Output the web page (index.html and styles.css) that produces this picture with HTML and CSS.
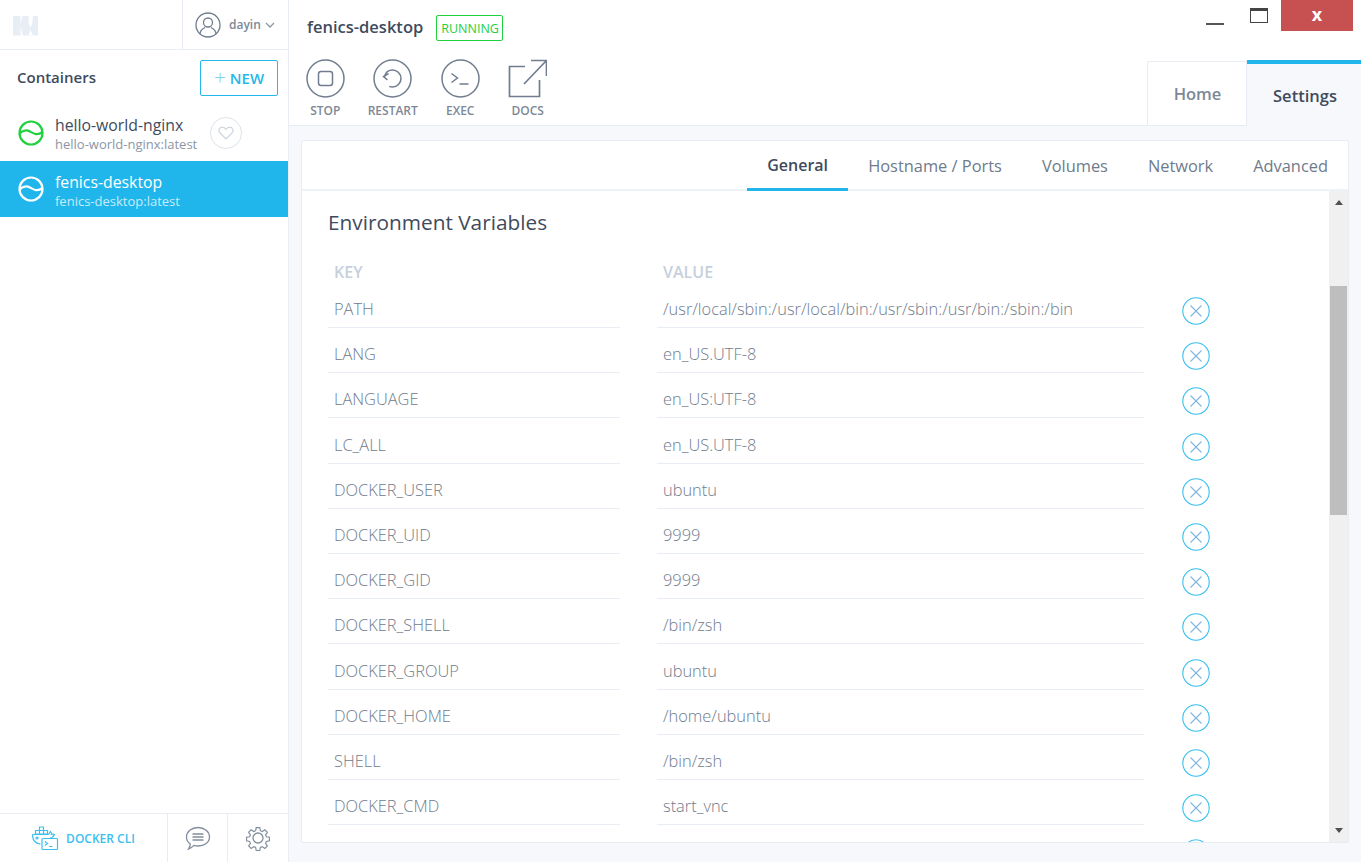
FILE: index.html
```html
<!DOCTYPE html>
<html lang="en">
<head>
    <meta charset="UTF-8">
    <title>Kitematic</title>
    <link rel="stylesheet" href="styles.css">
</head>
<body>
<div class="app">

    <aside class="sidebar">
        <div class="side-top">
            <div class="logo">
                <svg width="25" height="20" viewBox="0 0 25 20"><path fill="#e8eef5" d="M0 0h25v19.500H0z"/><path fill="#fff" d="M7.500 0h2L7.500 8zM7.500 11l2.500 8.500H7.500zM15.500 0h4.500l-.8 8-1.700 3.500L15.800 8zM17.500 13.500l-2 6h4.500z"/></svg>
            </div>
            <div class="user">
                <svg width="26" height="26" viewBox="0 0 26 26" fill="none" stroke="#717d8f" stroke-width="1.300"><circle cx="13" cy="13" r="12"/><circle cx="13" cy="10.500" r="4.500"/><path d="M5 22c0-4 3-5.500 5-6.500M21 22c0-4-3-5.500-5-6.500"/></svg>
                <span class="user-name">dayin</span>
                <svg width="10" height="6" viewBox="0 0 10 6" fill="none" stroke="#8b96a5" stroke-width="1.300"><path d="M1 1l4 4 4-4"/></svg>
            </div>
        </div>

        <div class="side-head">
            <span class="side-title">Containers</span>
            <button class="new-btn"><span class="plus">+</span> NEW</button>
        </div>

        <ul class="container-list">
            <li class="container-item first">
                <svg class="status" width="26" height="26" viewBox="0 0 26 26" fill="none" stroke="#1fd13c" stroke-width="2.200"><circle cx="13" cy="13" r="11.500"/><path d="M1.500 13.500C5 10 8.500 9.500 12 11.500S19 16 24.500 12"/></svg>
                <div class="item-text">
                    <div class="item-name">hello-world-nginx</div>
                    <div class="item-image">hello-world-nginx:latest</div>
                </div>
                <div class="fav">
                    <svg width="16" height="14" viewBox="0 0 16 14" fill="none" stroke="#cdd5e0" stroke-width="1.200"><path d="M8 13L2 7C0 5 1 1.200 4.200 1.200 6 1.200 7.300 2.300 8 3.500 8.700 2.300 10 1.200 11.800 1.200 15 1.200 16 5 14 7z"/></svg>
                </div>
            </li>
            <li class="container-item active">
                <svg class="status" width="26" height="26" viewBox="0 0 26 26" fill="none" stroke="#fff" stroke-width="2.200"><circle cx="13" cy="13" r="11.500"/><path d="M1.500 13.500C5 10 8.500 9.500 12 11.500S19 16 24.500 12"/></svg>
                <div class="item-text">
                    <div class="item-name">fenics-desktop</div>
                    <div class="item-image">fenics-desktop:latest</div>
                </div>
            </li>
        </ul>

        <div class="side-foot">
            <div class="foot-cli">
                <svg width="27" height="25" viewBox="0 0 27 25" fill="none" stroke="#3cc0ee" stroke-width="1.200"><path d="M7.500 1h4v3.500h-4zM3.500 4.500h4V8h-4zM7.500 4.500h4V8h-4zM11.500 4.500h4V8h-4zM0.500 8.500h15.500c1 0 1.500-2 2.500-3 .8 1 1.200 2 1 3 1-.5 2-.5 3 0-1 2-2.500 3.500-4.500 3.500"/><path d="M0.500 8.500c0 5 2.500 9 8 9.500"/><circle cx="5" cy="12" r="1"/><rect x="10" y="12.500" width="15.500" height="11" rx="1"/><path d="M13 15.500l2.500 2-2.500 2M17 20.500h3.500"/></svg>
                <span>DOCKER CLI</span>
            </div>
            <div class="foot-btn">
                <svg width="26" height="25" viewBox="0 0 26 25" fill="none" stroke="#838e9d" stroke-width="1.300"><path d="M13 1.500c6.500 0 11.500 4 11.500 9.500S19.500 20 13 20c-1.500 0-3-.2-4-.6-1.500 1.500-3 3-5.500 3.600 1-1.500 1.800-3 1.800-5C3 16.500 1.500 14 1.500 11 1.500 5.500 6.500 1.500 13 1.500z"/><path d="M7.500 8h11M7.500 11h11M7.500 14h11"/></svg>
            </div>
            <div class="foot-btn">
                <svg width="26" height="26" viewBox="0 0 26 26" fill="none" stroke="#838e9d" stroke-width="1.300"><circle cx="13" cy="13" r="5"/><path d="M11 1.500h4l.6 3.400 2.100.9 2.900-2 2.800 2.800-2 2.900.9 2.100 3.400.6v4l-3.400.6-.9 2.100 2 2.900-2.800 2.800-2.900-2-2.100.9-.6 3.400h-4l-.6-3.400-2.100-.9-2.900 2-2.800-2.800 2-2.900-.9-2.100-3.400-.6v-4l3.400-.6.9-2.100-2-2.900 2.800-2.800 2.900 2 2.100-.9z" transform="translate(1.300 1.300) scale(.9)"/></svg>
            </div>
        </div>
    </aside>

    <main class="main">
        <header class="main-head">
            <div class="head-left">
                <div class="title-row">
                    <span class="title">fenics-desktop</span>
                    <span class="state">RUNNING</span>
                </div>
                <div class="actions">
                    <div class="action">
                        <svg width="39" height="39" viewBox="0 0 39 39" fill="none" stroke="#717d8f" stroke-width="1.500"><circle cx="19.500" cy="19.500" r="18.500"/><rect x="12.500" y="12.500" width="14" height="14" rx="2.500"/></svg>
                        <span>STOP</span>
                    </div>
                    <div class="action">
                        <svg width="39" height="39" viewBox="0 0 39 39" fill="none" stroke="#717d8f" stroke-width="1.500"><circle cx="19.500" cy="19.500" r="18.500"/><path d="M11.500 17.500c1-4 4-6.500 8-6.500 4.700 0 8.500 3.800 8.500 8.500S24.200 28 19.500 28c-1.200 0-2.300-.2-3.300-.7"/><path d="M15.500 14.500l-5 3 4 3.500"/></svg>
                        <span>RESTART</span>
                    </div>
                    <div class="action">
                        <svg width="39" height="39" viewBox="0 0 39 39" fill="none" stroke="#717d8f" stroke-width="1.500"><circle cx="19.500" cy="19.500" r="18.500"/><path d="M10.500 14.500l6 4.500-6 4.500M18.500 25h9"/></svg>
                        <span>EXEC</span>
                    </div>
                    <div class="action">
                        <svg width="39" height="39" viewBox="0 0 39 39" fill="none" stroke="#717d8f" stroke-width="1.700"><path d="M17 7.500H1.500v30h30V21"/><path d="M16 25L38 2M23 1.500h15.500V17"/></svg>
                        <span>DOCS</span>
                    </div>
                </div>
            </div>
            <div class="head-right">
                <div class="win-controls">
                    <span class="win-min"></span>
                    <span class="win-max"></span>
                    <span class="win-close">x</span>
                </div>
                <nav class="main-tabs">
                    <div class="main-tab">Home</div>
                    <div class="main-tab selected">Settings</div>
                </nav>
            </div>
        </header>

        <section class="card">
            <nav class="sub-tabs">
                <div class="sub-tab selected">General</div>
                <div class="sub-tab">Hostname / Ports</div>
                <div class="sub-tab">Volumes</div>
                <div class="sub-tab">Network</div>
                <div class="sub-tab">Advanced</div>
            </nav>
            <div class="card-body">
                <div class="scroll-area">
                    <h3>Environment Variables</h3>
                    <div class="env-head"><span class="col-key">KEY</span><span class="col-value">VALUE</span></div>
                    <div class="env-row"><div class="cell-key">PATH</div><div class="cell-value">/usr/local/sbin:/usr/local/bin:/usr/sbin:/usr/bin:/sbin:/bin</div><svg class="remove" viewBox="0 0 28 28"><circle cx="14" cy="14" r="13.200"/><path d="M8.500 8.500l11 11M19.500 8.500l-11 11"/></svg></div>
                    <div class="env-row"><div class="cell-key">LANG</div><div class="cell-value">en_US.UTF-8</div><svg class="remove" viewBox="0 0 28 28"><circle cx="14" cy="14" r="13.200"/><path d="M8.500 8.500l11 11M19.500 8.500l-11 11"/></svg></div>
                    <div class="env-row"><div class="cell-key">LANGUAGE</div><div class="cell-value">en_US:UTF-8</div><svg class="remove" viewBox="0 0 28 28"><circle cx="14" cy="14" r="13.200"/><path d="M8.500 8.500l11 11M19.500 8.500l-11 11"/></svg></div>
                    <div class="env-row"><div class="cell-key">LC_ALL</div><div class="cell-value">en_US.UTF-8</div><svg class="remove" viewBox="0 0 28 28"><circle cx="14" cy="14" r="13.200"/><path d="M8.500 8.500l11 11M19.500 8.500l-11 11"/></svg></div>
                    <div class="env-row"><div class="cell-key">DOCKER_USER</div><div class="cell-value">ubuntu</div><svg class="remove" viewBox="0 0 28 28"><circle cx="14" cy="14" r="13.200"/><path d="M8.500 8.500l11 11M19.500 8.500l-11 11"/></svg></div>
                    <div class="env-row"><div class="cell-key">DOCKER_UID</div><div class="cell-value">9999</div><svg class="remove" viewBox="0 0 28 28"><circle cx="14" cy="14" r="13.200"/><path d="M8.500 8.500l11 11M19.500 8.500l-11 11"/></svg></div>
                    <div class="env-row"><div class="cell-key">DOCKER_GID</div><div class="cell-value">9999</div><svg class="remove" viewBox="0 0 28 28"><circle cx="14" cy="14" r="13.200"/><path d="M8.500 8.500l11 11M19.500 8.500l-11 11"/></svg></div>
                    <div class="env-row"><div class="cell-key">DOCKER_SHELL</div><div class="cell-value">/bin/zsh</div><svg class="remove" viewBox="0 0 28 28"><circle cx="14" cy="14" r="13.200"/><path d="M8.500 8.500l11 11M19.500 8.500l-11 11"/></svg></div>
                    <div class="env-row"><div class="cell-key">DOCKER_GROUP</div><div class="cell-value">ubuntu</div><svg class="remove" viewBox="0 0 28 28"><circle cx="14" cy="14" r="13.200"/><path d="M8.500 8.500l11 11M19.500 8.500l-11 11"/></svg></div>
                    <div class="env-row"><div class="cell-key">DOCKER_HOME</div><div class="cell-value">/home/ubuntu</div><svg class="remove" viewBox="0 0 28 28"><circle cx="14" cy="14" r="13.200"/><path d="M8.500 8.500l11 11M19.500 8.500l-11 11"/></svg></div>
                    <div class="env-row"><div class="cell-key">SHELL</div><div class="cell-value">/bin/zsh</div><svg class="remove" viewBox="0 0 28 28"><circle cx="14" cy="14" r="13.200"/><path d="M8.500 8.500l11 11M19.500 8.500l-11 11"/></svg></div>
                    <div class="env-row"><div class="cell-key">DOCKER_CMD</div><div class="cell-value">start_vnc</div><svg class="remove" viewBox="0 0 28 28"><circle cx="14" cy="14" r="13.200"/><path d="M8.500 8.500l11 11M19.500 8.500l-11 11"/></svg></div>
                    <div class="env-row"><div class="cell-key">&nbsp;</div><div class="cell-value">&nbsp;</div><svg class="remove" viewBox="0 0 28 28"><circle cx="14" cy="14" r="13.200"/><path d="M8.500 8.500l11 11M19.500 8.500l-11 11"/></svg></div>
                </div>
                <div class="scrollbar">
                    <div class="arrow-up"></div>
                    <div class="track"><div class="thumb"></div></div>
                    <div class="arrow-down"></div>
                </div>
            </div>
        </section>
    </main>

</div>
</body>
</html>
```

FILE: styles.css
```css
* {
    box-sizing: border-box;
}

html, body {
    height: 100%;
    margin: 0;
}

body {
    font-family: "Open Sans", "Noto Sans", sans-serif;
    background-color: #fff;
    overflow: hidden;
}

.app {
    display: flex;
    height: 862px;
}

/* sidebar */
.sidebar {
    width: 289px;
    flex: none;
    display: flex;
    flex-direction: column;
    border-right: 1px solid #e8edf3;
}

.side-top {
    height: 50px;
    flex: none;
    display: flex;
    border-bottom: 1px solid #e8edf3;
}

.logo {
    flex: 1;
    padding: 16px 0 0 13px;
}

.user {
    width: 106px;
    display: flex;
    align-items: center;
    gap: 8px;
    padding-left: 12px;
    border-left: 1px solid #e8edf3;
}

.user-name {
    font-size: 12px;
    font-weight: 600;
    color: #7d8897;
    margin-right: -4px;
}

.side-head {
    height: 60px;
    flex: none;
    display: flex;
    justify-content: space-between;
    padding: 10px 10px 0 17px;
}

.side-title {
    font-size: 15px;
    font-weight: 600;
    color: #3f4b5c;
    line-height: 34px;
}

.new-btn {
    width: 78px;
    height: 36px;
    padding: 0;
    border: 1px solid #24b8eb;
    border-radius: 2px;
    background-color: #fff;
    color: #24b8eb;
    font-family: inherit;
    font-size: 15px;
    font-weight: 600;
}

.plus {
    font-weight: 300;
    font-size: 21px;
    line-height: 14px;
    vertical-align: -1px;
    color: #7fcff0;
}

.container-list {
    list-style: none;
    margin: 0;
    padding: 0;
    flex: 1;
}

.container-item {
    display: flex;
    align-items: center;
    padding-left: 18px;
}

.container-item.first {
    height: 45px;
    margin-bottom: 6px;
}

.container-item.active {
    height: 56px;
    background-color: #20b6ec;
    color: #fff;
}

.status {
    flex: none;
    margin-right: 11px;
}

.item-text {
    width: 155px;
    margin-top: 3px;
}

.item-name {
    font-size: 15.8px;
    line-height: 20px;
    color: #3f4b5c;
}

.item-image {
    font-size: 13px;
    line-height: 18px;
    color: #8b96a5;
    white-space: nowrap;
}

.active .item-name {
    color: #fff;
}

.active .item-image {
    color: #c7ecfa;
}

.fav {
    width: 32px;
    height: 32px;
    display: flex;
    align-items: center;
    justify-content: center;
    border: 1px solid #dde3ea;
    border-radius: 50%;
}

.side-foot {
    height: 49px;
    flex: none;
    display: flex;
    padding-right: 1px;
    border-top: 1px solid #e8edf3;
}

.foot-cli {
    flex: 1;
    display: flex;
    align-items: center;
    justify-content: center;
    gap: 7px;
    font-size: 12px;
    font-weight: 600;
    color: #3cc0ee;
}

.foot-btn {
    width: 60px;
    display: flex;
    align-items: center;
    justify-content: center;
    border-left: 1px solid #e8edf3;
}

/* main */
.main {
    flex: 1;
    min-width: 0;
    display: flex;
    flex-direction: column;
    background-color: #f6f8fb;
}

.main-head {
    height: 126px;
    flex: none;
    display: flex;
    justify-content: space-between;
    background-color: #fff;
    border-bottom: 1px solid #e8edf3;
}

.head-left {
    padding: 15px 0 0 18px;
}

.title-row {
    display: flex;
    align-items: center;
    gap: 13px;
    height: 26px;
}

.title {
    padding-bottom: 3px;
    font-size: 16.5px;
    font-weight: 600;
    color: #3f4b5c;
}

.state {
    height: 26px;
    padding: 0 3px 0 4px;
    border: 1px solid #1fd13c;
    border-radius: 2px;
    font-size: 12.5px;
    line-height: 25px;
    color: #1fd13c;
}

.actions {
    display: flex;
    margin-top: 18px;
    margin-left: -1px;
}

.action {
    width: 67.5px;
    display: flex;
    flex-direction: column;
    align-items: center;
    gap: 4px;
    font-size: 12px;
    font-weight: 600;
    color: #7d8897;
}

.action:first-child {
    margin-left: -14.5px;
}

.action svg {
    display: block;
}

.head-right {
    display: flex;
    flex-direction: column;
    justify-content: space-between;
    align-items: flex-end;
}

.win-controls {
    display: flex;
    align-items: flex-start;
    padding-right: 8px;
}

.win-min {
    width: 18px;
    height: 2px;
    margin: 23px 26px 0 0;
    background-color: #555;
}

.win-max {
    width: 18px;
    height: 15px;
    margin: 8px 13px 0 0;
    border: 1px solid #444;
    border-top-width: 3px;
}

.win-close {
    width: 72px;
    height: 31px;
    background-color: #c75050;
    color: #fff;
    font-size: 18px;
    font-weight: 700;
    line-height: 29px;
    text-align: center;
}

.main-tabs {
    display: flex;
    margin-bottom: -1px;
}

.main-tab {
    width: 100px;
    height: 65px;
    padding-left: 1px;
    border: 1px solid #e8edf3;
    font-size: 16.5px;
    font-weight: 600;
    line-height: 64px;
    text-align: center;
    color: #7d8897;
}

.main-tab.selected {
    width: 114px;
    height: 66px;
    margin-top: -1px;
    padding-left: 2px;
    border: none;
    border-top: 4px solid #20b6ec;
    background-color: #f6f8fb;
    color: #3f4b5c;
    line-height: 63px;
}

.card {
    height: 703px;
    margin: 14px 12px 0 12px;
    display: flex;
    flex-direction: column;
    background-color: #fff;
    border: 1px solid #e8edf3;
    border-radius: 2px;
}

.sub-tabs {
    height: 50px;
    flex: none;
    display: flex;
    justify-content: flex-end;
    gap: 40px;
    padding-right: 20px;
    border-bottom: 2px solid #eef1f6;
}

.sub-tab {
    height: 50px;
    font-size: 16.4px;
    line-height: 49px;
    color: #6f7b8c;
}

.sub-tab.selected {
    width: 101px;
    margin-right: -20px;
    font-size: 16px;
    text-align: center;
    font-weight: 600;
    color: #3f4b5c;
    border-bottom: 3px solid #20b6ec;
}

.card-body {
    flex: 1;
    min-height: 0;
    display: flex;
}

.scroll-area {
    flex: 1;
    min-width: 0;
    overflow: hidden;
    padding: 17px 0 0 26px;
}

.scroll-area h3 {
    margin: 0;
    font-size: 20.8px;
    font-weight: 400;
    line-height: 29px;
    color: #3f4b5c;
}

.env-head {
    display: flex;
    margin-top: 24px;
    height: 31px;
    font-size: 16px;
    font-weight: 600;
    line-height: 22px;
    color: #c6d0dc;
}

.col-key {
    width: 329px;
    padding-left: 6px;
}

.col-value {
    padding-left: 6px;
}

.env-row {
    display: flex;
    height: 45.2px;
    flex: none;
}

.cell-key,
.cell-value {
    height: 36px;
    padding: 5px 6px 0;
    border-bottom: 1px solid #e8edf3;
    font-size: 16.4px;
    font-weight: 300;
    line-height: 24px;
    color: #6f7b8c;
    white-space: nowrap;
}

.cell-key {
    width: 292px;
    margin-right: 37px;
}

.cell-value {
    width: 487px;
    margin-right: 37.5px;
}

.remove {
    width: 28px;
    height: 28px;
    margin-top: 5px;
    fill: none;
    stroke: #35bff0;
    stroke-width: 1.100;
}

.remove path {
    stroke: #7fb6e0;
}

.scrollbar {
    width: 19px;
    flex: none;
    display: flex;
    flex-direction: column;
    align-items: center;
    background-color: #f0f0f0;
}

.arrow-up,
.arrow-down {
    width: 0;
    height: 0;
    flex: none;
    border-left: 4px solid transparent;
    border-right: 4px solid transparent;
}

.arrow-up {
    margin: 9px 0 6px;
    border-bottom: 5px solid #505050;
}

.arrow-down {
    margin: 6px 0 9px;
    border-top: 5px solid #505050;
}

.track {
    flex: 1;
    width: 100%;
    padding: 75px 1px 0;
}

.thumb {
    height: 229px;
    background-color: #bebebe;
}
```
